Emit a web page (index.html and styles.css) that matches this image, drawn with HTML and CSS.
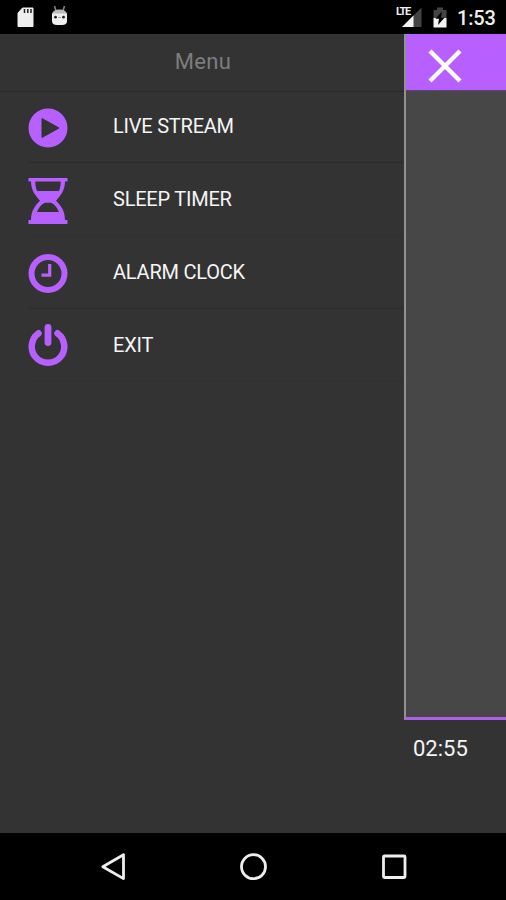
FILE: index.html
```html
<!DOCTYPE html>
<html lang="en">
<head>
<meta charset="utf-8">
<title>Menu</title>
<link rel="stylesheet" href="styles.css">
</head>
<body>
<div class="screen">
  <header class="status">
    <svg class="status-left" width="80" height="34" viewBox="0 0 80 34">
      <path d="M22.500 8H33V26.500H18V13Z" fill="#eee" stroke="#eee" stroke-width="1" stroke-linejoin="round"/>
      <path d="M24.500 9v4M27.800 9v4M31 9v4" stroke="#222" stroke-width="1.500"/>
      <path d="M54.500 6l1.500 5M64.500 6l-1.500 5" stroke="#888" stroke-width="1.500"/>
      <path d="M52 15Q52 9.500 59.500 9.500Q67 9.500 67 15Z" fill="#bbb"/>
      <path d="M52 13.500H67V21Q67 25 62 25H57Q52 25 52 21Z" fill="#eee"/>
      <circle cx="55.500" cy="17.200" r="1.400" fill="#222"/><circle cx="63.500" cy="17.200" r="1.400" fill="#222"/>
      <path d="M58 17.500h3" stroke="#aaa"/>
    </svg>
    <div class="status-right">
      <span class="lte">LTE</span>
      <svg width="54" height="34" viewBox="395 0 54 34">
        <path d="M421.500 7.500V27H402Z" fill="#444"/>
        <path d="M413.500 15.500V27H402Z" fill="#f4f4f4"/>
        <path d="M433.500 10H437V7.500H443V10H446.500V18H433.500Z" fill="#444"/>
        <path d="M433.500 18H446.500V27.500H433.500Z" fill="#f4f4f4"/>
        <path d="M442 11.500L435.500 18.800H439L438 25L444.500 17.700H441Z" fill="#000"/>
      </svg>
      <span class="clock">1:53</span>
    </div>
  </header>
  <main class="main">
    <nav class="drawer">
      <h1 class="title">Menu</h1>
      <ul class="list">
        <li class="item">
          <svg class="icon" width="40" height="50" viewBox="0 0 40 50"><circle cx="20" cy="25" r="19.500" fill="#b760ff"/><path d="M14 15.500L31 25L14 34.500Z" fill="#333" stroke="#333" stroke-linejoin="round"/></svg>
          <span class="label">LIVE STREAM</span>
        </li>
        <li class="item">
          <svg class="icon" width="40" height="50" viewBox="0 -1 40 50"><path d="M.5 2H39.500V5.500H37C37 15 32 20 28 24.800C32 29 37 34 37 44H39.500V48H.5V44H3C3 34 8 29 12 24.800C8 20 3 15 3 5.500H.5Z" fill="#b760ff"/><path d="M7.300 5.500H32.700C32.700 9 32.200 12 31 15H9C7.800 12 7.300 9 7.300 5.500ZM9 36C11 31 14.500 27.500 17 26.700H23C25.500 27.500 29 31 31 36Z" fill="#333"/></svg>
          <span class="label">SLEEP TIMER</span>
        </li>
        <li class="item">
          <svg class="icon" width="40" height="50" viewBox="0 -.5 40 50" fill="none" stroke="#b760ff"><circle cx="20" cy="25" r="16.500" stroke-width="6"/><path d="M21.700 15.500V26.700H13.500" stroke-width="3.200"/></svg>
          <span class="label">ALARM CLOCK</span>
        </li>
        <li class="item">
          <svg class="icon" width="40" height="50" viewBox="0 0 40 50" fill="none" stroke="#b760ff" stroke-linecap="round"><path d="M10.500 12.300A16.300 16.300 0 1 0 29.500 12.300" stroke-width="6.500"/><path d="M20 6.400V21.500" stroke-width="6.800"/></svg>
          <span class="label">EXIT</span>
        </li>
      </ul>
    </nav>
    <section class="page">
      <div class="content">
        <div class="topbar"><svg width="34" height="34" viewBox="0 0 34 34"><path d="M2 2L32 32M32 2L2 32" stroke="#fff" stroke-width="4.300"/></svg></div>
      </div>
      <div class="time">02:55</div>
    </section>
  </main>
  <footer class="navbar">
    <svg width="506" height="67" viewBox="0 833 506 67" fill="none" stroke="#eee" stroke-width="2.800" stroke-linejoin="round">
      <path d="M102.800 866.700L123.500 854.800V878.600Z"/>
      <circle cx="253.500" cy="866.700" r="12"/>
      <rect x="383.500" y="856" width="21.500" height="21.500" rx="1"/>
    </svg>
  </footer>
</div>
</body>
</html>
```

FILE: styles.css
```css
* { box-sizing: border-box; }
body { margin: 0; background: #333; font-family: Roboto, sans-serif; }
.screen { width: 506px; height: 900px; display: flex; flex-direction: column; overflow: hidden; }
.status { height: 34px; background: #000; display: flex; justify-content: space-between; color: #eee; }
.status svg { display: block; }
.status-right { display: grid; grid-template-columns: 54px 57px; }
.status-right svg, .lte { grid-area: 1 / 1; }
.lte { z-index: 1; font-size: 11px; line-height: 12px; font-weight: 700; padding: 6px 0 0 1px; letter-spacing: -1.3px; }
.clock { padding-left: 8px; font-size: 20px; line-height: 36px; font-weight: 500; letter-spacing: -.2px; }
.main { height: 799px; display: flex; }
.drawer { width: 404px; }
.title { margin: 0; height: 58px; padding-left: 2px; border-bottom: 1px solid #292929; text-align: center; font-size: 22px; line-height: 55px; font-weight: 400; color: #7d7d7d; letter-spacing: .3px; }
.list { margin: 0 0 0 28px; padding: 0; list-style: none; }
.item { height: 73px; display: flex; align-items: center; border-bottom: 1px solid #2c2c2c; }
.item:first-child { height: 71px; }
.item:nth-child(even) { border-color: #303030; }
.icon { width: 40px; height: 50px; }
.item:first-child .icon { margin-top: 1px; }
.item:not(:first-child) .icon { margin-top: 2px; }
.label { margin-left: 45px; font-size: 20px; line-height: 24px; padding-bottom: 3px; color: #f5f5f5; letter-spacing: -.22px; }
.item:not(:first-child) .label { padding-bottom: 1px; }
.page { width: 102px; }
.content { height: 686px; background: #474747; border-left: 2px solid #929292; border-bottom: 3px solid #ac61e8; }
.topbar { height: 57px; background: #b760ff; padding: 15px 0 0 22px; border-bottom: 1px solid #604477; }
.topbar svg { display: block; }
.time { padding-left: 9px; font-size: 22px; line-height: 57px; color: #f5f5f5; }
.navbar { height: 67px; background: #000; }
.navbar svg { display: block; }
```
